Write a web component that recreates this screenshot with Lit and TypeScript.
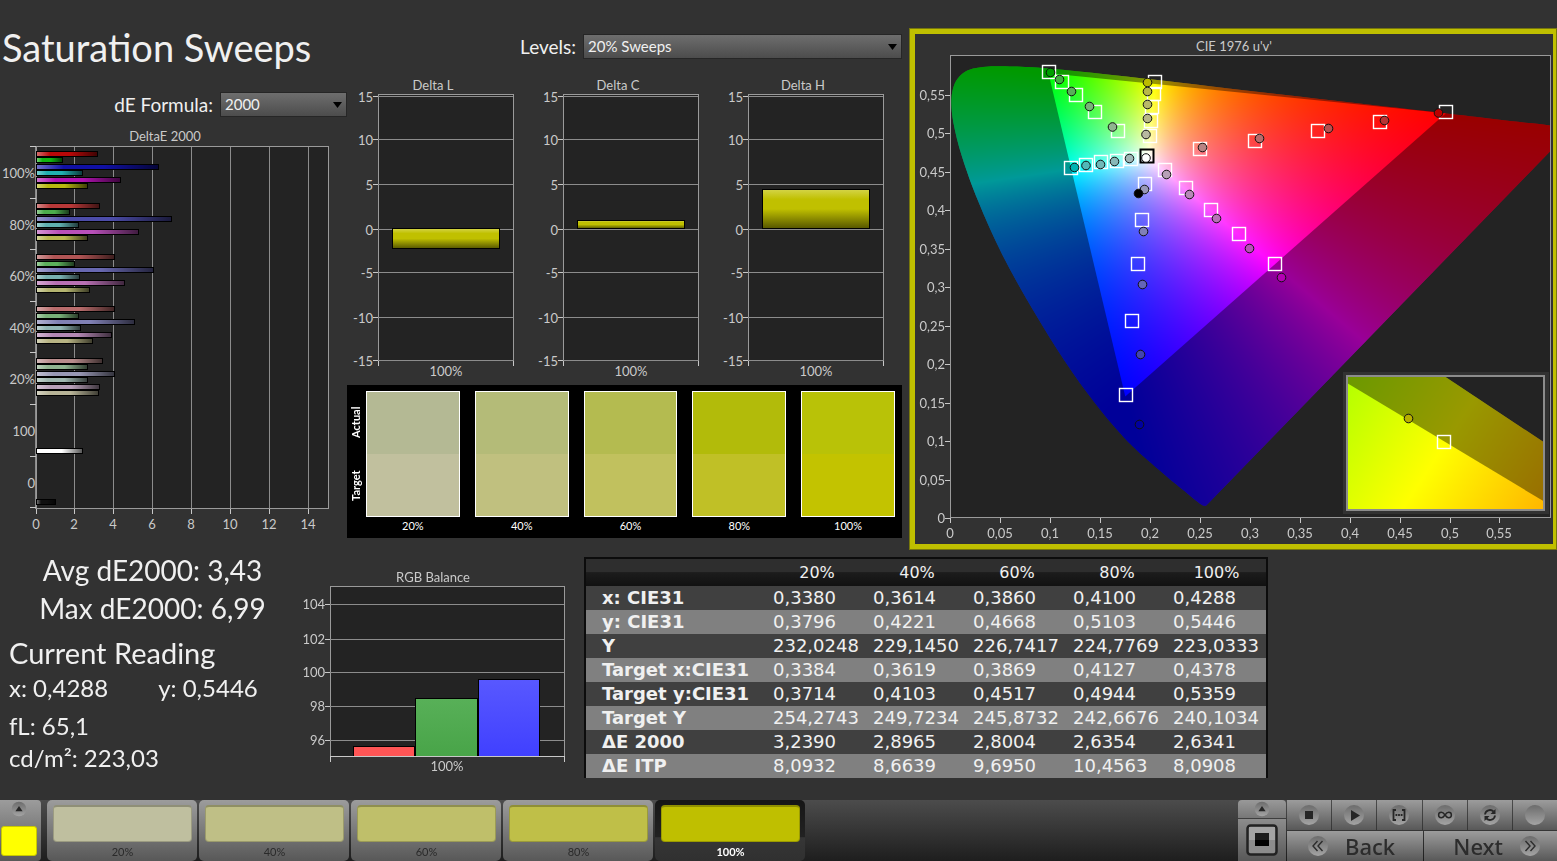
import { LitElement, html, svg, css } from "lit";
import { customElement, query } from "lit/decorators.js";
import { classMap } from "lit/directives/class-map.js";

type Point = [number, number];

const LEVELS = ["100%", "80%", "60%", "40%", "20%"];

const DE_GROUPS: { end: number; color: string }[][] = [
  [[97, "#b80808"], [62, "#10b410"], [158, "#1010a4"], [82, "#20b0b0"], [120, "#b012b0"], [87, "#b8b810"]],
  [[99, "#b83838"], [69, "#4cac4c"], [171, "#4c4ca8"], [78, "#60b0b0"], [138, "#b850b8"], [87, "#b8b850"]],
  [[114, "#b05454"], [74, "#5cb05c"], [153, "#6868b0"], [79, "#78b0b0"], [124, "#b870b4"], [89, "#b4b470"]],
  [[114, "#b86c6c"], [78, "#78b078"], [134, "#8080b4"], [80, "#90b4b4"], [111, "#b488b4"], [92, "#b8b484"]],
  [[102, "#b88c8c"], [87, "#90b490"], [114, "#9898b4"], [87, "#a0b8b0"], [99, "#b8a0b8"], [98, "#b8b498"]],
].map((g) => g.map(([end, color]) => ({ end: end as number, color: color as string })));

const TABLE_HEAD = ["20%", "40%", "60%", "80%", "100%"];
const TABLE_ROWS: [string, string[]][] = [
  ["x: CIE31", ["0,3380", "0,3614", "0,3860", "0,4100", "0,4288"]],
  ["y: CIE31", ["0,3796", "0,4221", "0,4668", "0,5103", "0,5446"]],
  ["Y", ["232,0248", "229,1450", "226,7417", "224,7769", "223,0333"]],
  ["Target x:CIE31", ["0,3384", "0,3619", "0,3869", "0,4127", "0,4378"]],
  ["Target y:CIE31", ["0,3714", "0,4103", "0,4517", "0,4944", "0,5359"]],
  ["Target Y", ["254,2743", "249,7234", "245,8732", "242,6676", "240,1034"]],
  ["ΔE 2000", ["3,2390", "2,8965", "2,8004", "2,6354", "2,6341"]],
  ["ΔE ITP", ["8,0932", "8,6639", "9,6950", "10,4563", "8,0908"]],
];

const SWATCHES = [
  { label: "20%", actual: "#b4b994", target: "#c1c09e" },
  { label: "40%", actual: "#b4bb78", target: "#c0c07f" },
  { label: "60%", actual: "#b4bb50", target: "#c1c15e" },
  { label: "80%", actual: "#b2bb0a", target: "#c0c026" },
  { label: "100%", actual: "#b9c207", target: "#c3c300" },
];

const TILES = [
  { label: "20%", color: "#bfbf9f" },
  { label: "40%", color: "#bfbf86" },
  { label: "60%", color: "#bfbf6a" },
  { label: "80%", color: "#bfbf48" },
  { label: "100%", color: "#bfbf00" },
];

/* Spectral locus, CIE 1931 2° chromaticities. */
const LOCUS: Point[] = [
  [0.1741, 0.005], [0.1733, 0.0048], [0.1714, 0.0051], [0.1689, 0.0069], [0.1644, 0.0109],
  [0.1566, 0.0177], [0.144, 0.0297], [0.1355, 0.0399], [0.1241, 0.0578], [0.1096, 0.0868],
  [0.0913, 0.1327], [0.0687, 0.2007], [0.0454, 0.295], [0.0235, 0.4127], [0.0082, 0.5384],
  [0.0039, 0.6548], [0.0139, 0.7502], [0.0389, 0.812], [0.0743, 0.8338], [0.1142, 0.8262],
  [0.1547, 0.8059], [0.2296, 0.7543], [0.3016, 0.6923], [0.3731, 0.6245], [0.4441, 0.5547],
  [0.5125, 0.4866], [0.5752, 0.4242], [0.627, 0.3725], [0.6658, 0.334], [0.6915, 0.3083],
  [0.719, 0.2809], [0.7347, 0.2653],
];
const PRIMARIES: Point[] = [[0.68, 0.32], [0.265, 0.69], [0.15, 0.06]];

const PLOT_W = 600;
const PLOT_H = 462;
const U_SCALE = 999;
const V_SCALE = 770;

const toPlot = ([x, y]: Point): Point => {
  const d = -2 * x + 12 * y + 3;
  return [((4 * x) / d) * U_SCALE, PLOT_H - ((9 * y) / d) * V_SCALE];
};

const tracePolygon = (ctx: CanvasRenderingContext2D, pts: Point[]) => {
  ctx.beginPath();
  pts.forEach(([x, y], i) => (i ? ctx.lineTo(x, y) : ctx.moveTo(x, y)));
  ctx.closePath();
};

/* Smooth closed-on-one-side curve through the locus points. */
const traceLocus = (ctx: CanvasRenderingContext2D, pts: Point[]) => {
  ctx.beginPath();
  ctx.moveTo(pts[0][0], pts[0][1]);
  for (let i = 0; i < pts.length - 1; i++) {
    const p0 = pts[Math.max(0, i - 1)];
    const p1 = pts[i];
    const p2 = pts[i + 1];
    const p3 = pts[Math.min(pts.length - 1, i + 2)];
    ctx.bezierCurveTo(
      p1[0] + (p2[0] - p0[0]) / 6, p1[1] + (p2[1] - p0[1]) / 6,
      p2[0] - (p3[0] - p1[0]) / 6, p2[1] - (p3[1] - p1[1]) / 6,
      p2[0], p2[1],
    );
  }
  ctx.closePath();
};

const paintColors = (): HTMLCanvasElement => {
  const c = document.createElement("canvas");
  c.width = PLOT_W;
  c.height = PLOT_H;
  const ctx = c.getContext("2d")!;
  const img = ctx.createImageData(PLOT_W, PLOT_H);
  for (let py = 0; py < PLOT_H; py++) {
    for (let px = 0; px < PLOT_W; px++) {
      const u = px / U_SCALE;
      const v = Math.max(0.001, (PLOT_H - py) / V_SCALE);
      const d = 6 * u - 16 * v + 12;
      const x = (9 * u) / d;
      const y = (4 * v) / d;
      const z = 1 - x - y;
      const rgb = [
        2.4934969 * x - 0.9313836 * y - 0.4027108 * z,
        -0.829489 * x + 1.7626641 * y + 0.0236247 * z,
        0.0358458 * x - 0.0761724 * y + 0.9568845 * z,
      ].map((n) => Math.max(0, n));
      const top = Math.max(...rgb, 1e-6);
      const o = (py * PLOT_W + px) * 4;
      rgb.forEach((n, i) => (img.data[o + i] = (255 * n) / top));
      img.data[o + 3] = 255;
    }
  }
  ctx.putImageData(img, 0, 0);
  return c;
};

const TARGETS: Point[] = [
  [1049, 72], [1062, 82], [1076, 95], [1095, 112], [1118, 131],
  [1155, 82], [1154, 94], [1152, 107], [1151, 121], [1150, 136],
  [1071, 168], [1086, 165], [1101, 162], [1117, 161], [1131, 159],
  [1145, 184], [1142, 220], [1138, 264], [1132, 321], [1126, 395],
  [1165, 170], [1186, 188], [1211, 210], [1239, 234], [1275, 264],
  [1200, 149], [1255, 141], [1318, 131], [1380, 122], [1446, 112],
];

const READINGS: [number, number, string][] = [
  [1050.5, 72.5, "#00a000"], [1059.5, 79.5, "#40b040"], [1071.5, 91.5, "#58b058"], [1089.5, 106.5, "#78b478"], [1112.5, 127, "#90b490"],
  [1147.5, 82.5, "#bcbc00"], [1147.5, 91.5, "#b8b848"], [1147.5, 104.5, "#b8b868"], [1147.5, 118.5, "#b8b888"], [1146, 134.5, "#b8b8a0"],
  [1074.5, 167.5, "#00b4b4"], [1086, 165.5, "#50b8b8"], [1100.5, 164.5, "#70b8b8"], [1114.5, 161.5, "#88b8b8"], [1129.5, 158.5, "#a0b8b8"],
  [1144.5, 189.5, "#9898b8"], [1143.5, 231.5, "#8080b8"], [1142.5, 284.5, "#6464b8"], [1140.5, 354.5, "#4444b0"], [1139.5, 424.5, "#0000a0"],
  [1166.5, 174.5, "#b8a0b8"], [1189.5, 194.5, "#b888b8"], [1216.5, 218.5, "#b870b8"], [1249.5, 248.5, "#b850b8"], [1281.5, 277.5, "#b400b4"],
  [1202.5, 147.5, "#b88484"], [1259.5, 138.5, "#b86c6c"], [1328.5, 128.5, "#b85050"], [1384.5, 120.5, "#b83434"], [1438.5, 113, "#b80000"],
  [1146, 158, "#ffffff"], [1138.5, 193.5, "#000000"],
];

const square = (x: number, y: number, cls = "target") =>
  svg`<rect class=${cls} x=${x - 6.5} y=${y - 6.5} width="13" height="13"></rect>`;

@customElement("app-root")
export class AppRoot extends LitElement {
  @query("canvas") private canvas!: HTMLCanvasElement;

  static styles = css`
    :host {
      display: flex;
      flex-direction: column;
      min-height: 100vh;
      background: #323232;
      color: #f0f0f0;
      font-family: Lato, "Liberation Sans", sans-serif;
      overflow: hidden;
    }
    * { box-sizing: border-box; }
    svg { display: block; }
    button { font: inherit; border: 0; margin: 0; padding: 0; }
    .chart { width: 100%; height: auto; }
    .chart text { font-size: 13px; fill: #cacaca; }
    .end { text-anchor: end; }
    .mid { text-anchor: middle; }
    .thin { fill: #232323; stroke: #9a9a9a; stroke-width: 1; }
    .grid { stroke: #8c8c8c; stroke-width: 1; fill: none; }
    .tick { stroke: #c8c8c8; stroke-width: 1; fill: none; }
    .bar { stroke: #000; stroke-width: 1; }

    .upper {
      display: grid;
      grid-template-columns: minmax(0, 347fr) minmax(0, 555fr) minmax(0, 655fr);
    }
    .left { padding-top: 23px; }
    .middle { padding-top: 34px; }
    .right { padding: 28px 0 0 7px; }
    h1 { margin: 0 0 21px 2px; font-size: 38px; line-height: 48px; font-weight: 400; white-space: nowrap; }
    .field { display: flex; align-items: center; justify-content: flex-end; gap: 7px; font-size: 19px; line-height: 25px; }
    .field-formula { margin-bottom: 5px; }
    .field-levels { margin-bottom: 16px; }
    .pick { display: grid; }
    .pick > * { grid-area: 1 / 1; }
    .pick select {
      appearance: none;
      width: 100%;
      height: 25px;
      padding: 0 4px;
      border: 1px solid #262626;
      border-radius: 0;
      background: linear-gradient(#6e6e6e, #4c4c4c);
      color: #f0f0f0;
      font: 15px/23px Lato, "Liberation Sans", sans-serif;
    }
    .pick svg { justify-self: end; align-self: center; margin-right: 5px; pointer-events: none; z-index: 1; }
    .pick-formula { width: 127px; }
    .pick-levels { width: 319px; }

    .swatches {
      display: flex;
      padding: 6px 7px 0 1px;
      height: 153px;
      background: #000;
      color: #fff;
      font-size: 11px;
    }
    .side { display: grid; grid-template-rows: 1fr 1fr; width: 18px; height: 126px; font-weight: 700; }
    .side span { writing-mode: vertical-rl; rotate: 180deg; text-align: center; line-height: 16px; }
    .pairs { flex: 1; display: grid; grid-template-columns: repeat(5, minmax(0, 1fr)); column-gap: 15px; }
    .sw { text-align: center; line-height: 18px; }
    .pair { display: grid; grid-template-rows: 1fr 1fr; height: 126px; border: 1px solid #fff; }

    .cie { border: 6px solid #bfbf00; border-right-width: 4px; outline: 1px solid #77770c; outline-offset: -1px; }
    .target { fill: none; stroke: #fff; stroke-width: 1.4; }
    .target.white { stroke: #000; stroke-width: 2; fill: #ffffff60; }
    .read { stroke: #111; stroke-width: 1; }
    .surface { display: block; width: 600px; height: 462px; }
    .frame { fill: none; stroke: #8c8c8c; stroke-width: 2; }

    .lower {
      display: grid;
      grid-template-columns: minmax(0, 300fr) minmax(0, 284fr) minmax(0, 684fr) minmax(0, 289fr);
      align-items: start;
      padding-bottom: 20px;
    }
    .readings { padding: 1px 0 0 9px; white-space: nowrap; }
    .big { font-size: 28px; line-height: 38px; padding-right: 4px; text-align: center; }
    .readings h2 { margin: 7px 0 0; font-size: 29px; line-height: 38px; font-weight: 400; }
    .line { display: flex; gap: 50px; font-size: 24px; line-height: 32px; }
    .line-gap { margin-bottom: 6px; }

    table {
      margin-top: 7px;
      width: 100%;
      table-layout: fixed;
      border-collapse: collapse;
      border: 2px solid #0c0c0c;
      border-bottom: 0;
      font: 18px/24px "DejaVu Sans", sans-serif;
    }
    .c-name { width: 182px; }
    tr { height: 24px; }
    thead tr { height: 28px; background: linear-gradient(#2e2e2e 50%, #1c1c1c 52%, #111); }
    thead th { font-weight: 400; font-size: 16px; padding: 0; }
    tbody tr { background: #404040; }
    tbody tr:nth-child(even) { background: #808080; }
    tbody th { text-align: left; padding: 0 0 0 16px; font-weight: 700; white-space: nowrap; }
    td { padding: 0 0 0 6px; white-space: nowrap; }

    footer {
      display: flex;
      height: 61px;
      margin-top: auto;
      background: linear-gradient(#4c4c4c, #1e1e1e);
      color: #2a2a2a;
    }
    .metal { background: linear-gradient(#9c9c9c, #585858); }
    .current {
      display: flex;
      flex-direction: column;
      align-items: center;
      justify-content: space-between;
      width: 41px;
      padding: 1px 4px 5px 0;
      border-radius: 0 4px 4px 0;
      margin-right: 6px;
    }
    .now { align-self: stretch; margin-left: 1px; height: 30px; background: #ff0; border-radius: 3px; border: 1px solid #c8c800; }
    .tiles { display: flex; gap: 2px; flex: 1; }
    .tile {
      display: flex;
      flex-direction: column;
      justify-content: space-between;
      width: 150px;
      padding: 5px 5px 2px 6px;
      border-radius: 5px;
      font-size: 11px;
      line-height: 14px;
      color: #2a2a2a;
      text-align: center;
    }
    .tile.on { background: linear-gradient(#161616, #222 60%, #363636 62%, #303030); color: #fff; font-weight: 700; }
    .chip { height: 37px; border-radius: 4px; border: 1px solid #00000030; border-top: 2px solid #00000040; }
    .stopper { width: 48px; display: flex; flex-direction: column; gap: 1px; margin-right: 1px; border-radius: 4px 4px 0 0; overflow: hidden; }
    .stopper button { display: grid; place-items: center; color: #1c1c1c; }
    .up { height: 18px; }
    .metal.up { background: linear-gradient(#999, #777); }
    .stop { height: 42px; }
    .metal.stop { background: linear-gradient(#8c8c8c, #585858); }
    .controls { width: 270px; display: grid; grid-template-rows: 30px 30px; row-gap: 1px; }
    .tools { display: grid; grid-template-columns: repeat(6, 1fr); column-gap: 1px; }
    .nav { display: grid; grid-template-columns: 136px 1fr; column-gap: 1px; }
    .tools button { display: grid; place-items: center; }
    .nav button {
      display: flex;
      align-items: center;
      gap: 16px;
      padding: 0 16px 0 20px;
      font: 500 22px/30px "Noto Sans", sans-serif;
      color: #2c2c2c;
    }
    .nav .next { justify-content: flex-end; }
  `;

  protected firstUpdated() {
    const ctx = this.canvas.getContext("2d")!;
    const colors = paintColors();
    ctx.save();
    traceLocus(ctx, LOCUS.map(toPlot));
    ctx.clip();
    ctx.drawImage(colors, 0, 0);
    ctx.fillStyle = "rgba(0,0,0,.4)";
    ctx.fillRect(0, 0, PLOT_W, PLOT_H);
    tracePolygon(ctx, PRIMARIES.map(toPlot));
    ctx.clip();
    ctx.drawImage(colors, 0, 0);
    ctx.restore();
  }

  private deltaE() {
    const xs = [0, 2, 4, 6, 8, 10, 12, 14];
    const labels = [...LEVELS, "100", "0"];
    const bar = (end: number, y: number, color: string) => svg`
      <rect class="bar" x="36.5" y=${y} width=${end - 36} height="5" fill=${color}></rect>
      <rect x="37" y=${y + 0.5} width=${end - 37} height="4" fill="url(#gloss-x)"></rect>`;
    return html`<svg class="chart" viewBox="0 122 347 418" role="img" aria-label="DeltaE 2000 chart">
      <defs>
        <linearGradient id="gloss-x">
          <stop offset="0" stop-color="#fff" stop-opacity=".4"></stop>
          <stop offset=".22" stop-color="#fff" stop-opacity="0"></stop>
          <stop offset=".55" stop-color="#000" stop-opacity="0"></stop>
          <stop offset="1" stop-color="#000" stop-opacity=".65"></stop>
        </linearGradient>
      </defs>
      <text class="mid" x="165" y="141">DeltaE 2000</text>
      <rect class="thin" x="36.5" y="146.5" width="292" height="362"></rect>
      ${xs.map((n) => {
        const x = Math.round(35.500 + n * 19.45) + 0.5;
        return svg`
          ${n ? svg`<path class="grid" d="M${x} 147V508"></path>` : ""}
          <path class="tick" d="M${x} 509V514"></path>
          <text class="mid" x=${x - 0.5} y="529">${n}</text>`;
      })}
      <path class="grid" d="M35.5 147V509"></path>
      ${[0, 1, 2, 3, 4, 5, 6, 7].map((i) => svg`<path class="tick" d="M30 ${Math.round(146 + i * 51.6) + 0.5}H36"></path>`)}
      ${labels.map((t, i) => svg`<text class="end" x="35" y=${Math.round(178 + i * 51.6)}>${t}</text>`)}
      ${DE_GROUPS.map((g, i) => g.map((b, j) => bar(b.end, Math.round(151 + i * 51.7 + j * 6.45) + 0.5, b.color)))}
      ${bar(82, 448.5, "#ffffff")}
      ${bar(55, 499.5, "#101010")}
    </svg>`;
  }

  private deltas() {
    const ticks: Point[] = [[15, 96], [10, 139], [5, 184], [0, 229], [-5, 272], [-10, 317], [-15, 360]];
    const plots = [
      { name: "Delta L", y: 228, h: 20 },
      { name: "Delta C", y: 220, h: 8 },
      { name: "Delta H", y: 189, h: 39 },
    ];
    return html`<svg class="chart" viewBox="347 75 555 310" role="img" aria-label="Delta L, C and H charts">
      <defs>
        <linearGradient id="gloss-y" x2="0" y2="1">
          <stop offset="0" stop-color="#d4d448"></stop>
          <stop offset=".25" stop-color="#c0c000"></stop>
          <stop offset=".5" stop-color="#c0c000"></stop>
          <stop offset="1" stop-color="#565600"></stop>
        </linearGradient>
      </defs>
      ${plots.map((p, i) => svg`<g transform="translate(${i * 185} 0)">
        <text class="mid" x="433" y="90">${p.name}</text>
        <rect class="thin" x="378.5" y="94.5" width="135" height="266"></rect>
        ${ticks.map(([n, y]) => svg`
          <path class="grid" d="M378 ${y + 0.5}H513"></path>
          <path class="tick" d="M373 ${y + 0.5}H378"></path>
          <text class="end" x="373" y=${y + 6}>${n}</text>`)}
        <path class="tick" d="M378.5 361V366M513.5 361V366"></path>
        <rect class="bar" x="392.5" y=${p.y + 0.5} width="107" height=${p.h} fill="url(#gloss-y)"></rect>
        <text class="mid" x="446" y="376">100%</text>
      </g>`)}
    </svg>`;
  }

  private swatches() {
    return html`<div class="swatches">
      <div class="side"><span>Actual</span><span>Target</span></div>
      <div class="pairs">
        ${SWATCHES.map((s) => html`<div class="sw">
          <div class="pair">
            <div style="background:${s.actual}"></div>
            <div style="background:${s.target}"></div>
          </div>
          ${s.label}
        </div>`)}
      </div>
    </div>`;
  }

  private cie() {
    const fmt = (n: number) => String(n / 100).replace(".", ",");
    const steps = [0, 5, 10, 15, 20, 25, 30, 35, 40, 45, 50, 55];
    return html`<div class="cie"><svg class="chart" viewBox="915 34 638 510" role="img" aria-label="CIE 1976 u'v' diagram">
      <defs>
        <linearGradient id="hue" gradientUnits="userSpaceOnUse" x1="1349" y1="380" x2="1542" y2="506">
          <stop offset="0" stop-color="#b4ff00"></stop>
          <stop offset=".5" stop-color="#ffff00"></stop>
          <stop offset="1" stop-color="#ffb800"></stop>
        </linearGradient>
      </defs>
      <text class="mid" x="1234" y="51">CIE 1976 u'v'</text>
      <rect x="950" y="55" width="601" height="463" fill="#232323"></rect>
      <foreignObject x="950" y="56" width="600" height="462">
        <canvas class="surface" width="600" height="462"></canvas>
      </foreignObject>
      <rect class="thin" fill-opacity="0" x="950.5" y="55.5" width="600" height="462"></rect>
      ${steps.map((n) => {
        const x = Math.round(950 + n * 9.99) + 0.5;
        const y = Math.round(518 - n * 7.7) + 0.5;
        return svg`
          <path class="tick" d="M${x} 518V523M945 ${y}H950"></path>
          <text class="mid" x=${x - 0.5} y="538">${fmt(n)}</text>
          <text class="end" x="945" y=${y + 4.5}>${fmt(n)}</text>`;
      })}
      ${TARGETS.map(([x, y]) => square(x, y))}
      ${square(1147, 156, "target white")}
      ${READINGS.map(([x, y, c]) => svg`<circle class="read" cx=${x} cy=${y} r="4.3" fill=${c}></circle>`)}
      <rect x="1343" y="372" width="206" height="142" fill="#323232"></rect>
      <rect x="1347" y="376" width="198" height="134" fill="#232323"></rect>
      <path d="M1347 376H1444L1545 443V510H1347Z" fill="url(#hue)"></path>
      <path d="M1347 376H1444L1545 443V502L1347 383Z" fill="#000" fill-opacity=".4"></path>
      <rect class="frame" x="1347" y="376" width="197" height="134"></rect>
      ${square(1444, 442)}
      <circle class="read" cx="1408.5" cy="418.5" r="4.3" fill="#b8b000"></circle>
    </svg></div>`;
  }

  private rgb() {
    const ticks: Point[] = [[104, 604], [102, 639], [100, 672], [98, 706], [96, 740]];
    return html`<svg class="chart" viewBox="300 550 284 230" role="img" aria-label="RGB Balance chart">
      <defs>
        <linearGradient id="green" x2="0" y2="1"><stop offset="0" stop-color="#58b058"></stop><stop offset="1" stop-color="#48a448"></stop></linearGradient>
        <linearGradient id="blue" x2="0" y2="1"><stop offset="0" stop-color="#5858ff"></stop><stop offset="1" stop-color="#4040ff"></stop></linearGradient>
      </defs>
      <text class="mid" x="433" y="582">RGB Balance</text>
      <rect class="thin" x="330.5" y="586.5" width="234" height="170"></rect>
      ${ticks.map(([n, y]) => svg`
        <path class="grid" d="M330 ${y + 0.5}H564"></path>
        <path class="tick" d="M325 ${y + 0.5}H330"></path>
        <text class="end" x="325" y=${y + 5}>${n}</text>`)}
      <rect class="bar" x="353.5" y="746.5" width="61" height="10" fill="#ff5555"></rect>
      <rect class="bar" x="415.5" y="698.5" width="62" height="58" fill="url(#green)"></rect>
      <rect class="bar" x="478.5" y="679.5" width="61" height="77" fill="url(#blue)"></rect>
      <path class="tick" d="M330 756.5H565M330.5 757V762M564.5 757V762"></path>
      <text class="mid" x="447" y="771">100%</text>
    </svg>`;
  }

  private arrow() {
    return html`<svg width="9" height="6" viewBox="0 0 9 6" aria-hidden="true"><path d="M0 0H9L4.500 6Z" fill="#000"></path></svg>`;
  }

  private knob(glyph: unknown, size = 22) {
    return html`<svg width=${size} height=${size} viewBox="0 0 22 22" aria-hidden="true">
      <defs><linearGradient id="knob" x2="0" y2="1"><stop offset="0" stop-color="#6c6c6c"></stop><stop offset="1" stop-color="#a4a4a4"></stop></linearGradient></defs>
      <circle cx="11" cy="11" r="10" fill="url(#knob)"></circle>${glyph}
    </svg>`;
  }

  private footer() {
    const up = svg`<path d="M11 7L16 14H6Z" fill="#262626"></path>`;
    const tools: [string, unknown][] = [
      ["Stop", svg`<path d="M7 7H15V15H7Z" fill="#262626"></path>`],
      ["Play", svg`<path d="M8 6L17 11.500L8 17Z" fill="#262626"></path>`],
      ["Read series", svg`<g stroke="#262626" stroke-width="1.800" fill="none"><path d="M8 6H5.500V16H8M14 6H16.500V16H14"></path><path d="M7.500 11H14.500" stroke-dasharray="1.800 .8"></path></g>`],
      ["Continuous", svg`<path d="M11 11C9.500 8.800 8.500 8.300 7.300 8.300A2.700 2.700 0 0 0 7.300 13.700C8.500 13.700 9.500 13.200 11 11C12.500 8.800 13.500 8.300 14.700 8.300A2.700 2.700 0 0 1 14.700 13.700C13.500 13.700 12.500 13.200 11 11Z" fill="none" stroke="#262626" stroke-width="1.500"></path>`],
      ["Refresh", svg`<g fill="none" stroke="#262626" stroke-width="1.800"><path d="M6 10.500A5 5 0 0 1 14.500 7.500M16 11.500A5 5 0 0 1 7.500 14.500"></path></g><path d="M16.500 5V10H11.500ZM5.500 17V12H10.500Z" fill="#262626"></path>`],
      ["Record", ""],
    ];
    return html`<footer>
      <div class="current metal">
        ${this.knob(up, 16)}
        <div class="now"></div>
      </div>
      <div class="tiles">
        ${TILES.map((t, i) => {
          const on = i === TILES.length - 1;
          return html`<button class=${classMap({ tile: true, metal: !on, on })}>
            <div class="chip" style="background-color:${t.color}"></div>${t.label}
          </button>`;
        })}
      </div>
      <div class="stopper">
        <button class="metal up" aria-label="Expand">${this.knob(up, 16)}</button>
        <button class="metal stop" aria-label="Pattern window">
          <svg width="32" height="32" viewBox="0 0 32 32" aria-hidden="true">
            <rect x="1.500" y="1.500" width="29" height="29" rx="3" fill="#8c8c8c" stroke="#222" stroke-width="2.500"></rect>
            <path d="M3 3H29V16H3Z" fill="#a4a4a4"></path>
            <path d="M9 9H23V22H9Z" fill="#000"></path>
            <path d="M9 9H23V16H9Z" fill="#1c1c1c"></path>
          </svg>
        </button>
      </div>
      <div class="controls">
        <div class="tools">
          ${tools.map(([name, g]) => html`<button class="metal" aria-label=${name}>${this.knob(g)}</button>`)}
        </div>
        <div class="nav">
          <button class="metal">${this.knob(svg`<path d="M10.500 6L6 11L10.500 16M15.500 6L11 11L15.500 16" fill="none" stroke="#2c2c2c" stroke-width="1.400"></path>`)}Back</button>
          <button class="metal next">Next${this.knob(svg`<path d="M6.500 6L11 11L6.500 16M11.500 6L16 11L11.500 16" fill="none" stroke="#2c2c2c" stroke-width="1.400"></path>`)}</button>
        </div>
      </div>
    </footer>`;
  }

  render() {
    return html`
      <section class="upper">
        <div class="left">
          <h1>Saturation Sweeps</h1>
          <div class="field field-formula">
            <label for="formula">dE Formula:</label>
            <div class="pick pick-formula"><select id="formula"><option>2000</option></select>${this.arrow()}</div>
          </div>
          ${this.deltaE()}
        </div>
        <div class="middle">
          <div class="field field-levels">
            <label for="levels">Levels:</label>
            <div class="pick pick-levels"><select id="levels"><option>20% Sweeps</option></select>${this.arrow()}</div>
          </div>
          ${this.deltas()}
          ${this.swatches()}
        </div>
        <div class="right">${this.cie()}</div>
      </section>
      <section class="lower">
        <div class="readings">
          <div class="big">Avg dE2000: 3,43</div>
          <div class="big">Max dE2000: 6,99</div>
          <h2>Current Reading</h2>
          <div class="line line-gap"><span>x: 0,4288</span><span>y: 0,5446</span></div>
          <div class="line">fL: 65,1</div>
          <div class="line">cd/m²: 223,03</div>
        </div>
        ${this.rgb()}
        <table>
          <colgroup><col class="c-name"><col><col><col><col><col></colgroup>
          <thead><tr><th></th>${TABLE_HEAD.map((h) => html`<th scope="col">${h}</th>`)}</tr></thead>
          <tbody>
            ${TABLE_ROWS.map(([name, cells]) => html`<tr><th scope="row">${name}</th>${cells.map((c) => html`<td>${c}</td>`)}</tr>`)}
          </tbody>
        </table>
      </section>
      ${this.footer()}
    `;
  }
}
